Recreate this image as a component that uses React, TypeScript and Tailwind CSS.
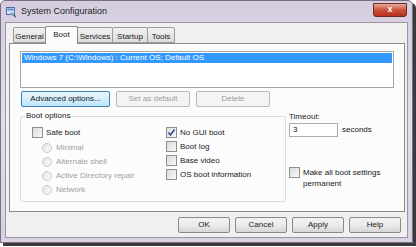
import React from 'react';

const font = { fontFamily: '"Liberation Sans", Arial, sans-serif' };

const WinButton: React.FC<{ label: string; width: string; disabled?: boolean; focused?: boolean }> = ({ label, width, disabled, focused }) => {
  const border = disabled ? 'border-[#b5b9bc]' : focused ? 'border-[#3c7fb1]' : 'border-[#8a8a8a]';
  const bg = disabled
    ? 'bg-[#f4f4f4]'
    : focused
    ? 'bg-gradient-to-b from-[#eaf6fd] to-[#bee6fd]'
    : 'bg-gradient-to-b from-[#f2f2f2] via-[#ebebeb] to-[#d6d6d6]';
  return (
    <div
      className={`${width} h-[16px] rounded-[2px] border ${border} ${bg} flex items-center justify-center text-[8px] ${disabled ? 'text-[#9d9d9d]' : 'text-[#1a1a1a]'}`}
    >
      {label}
    </div>
  );
};

const CheckBox: React.FC<{ label: React.ReactNode; checked?: boolean }> = ({ label, checked }) => (
  <div className="flex items-start gap-[3px] min-h-[14px]">
    <div className="w-[11px] h-[11px] border border-[#8e8f8f] bg-gradient-to-br from-[#dcdcdc] to-[#f8f8f8] flex items-center justify-center shrink-0">
      {checked && (
        <svg width="9" height="9" viewBox="0 0 9 9">
          <path d="M1.5 4.5 L3.5 7 L7.5 1.5" stroke="#2d4a8c" strokeWidth="1.5" fill="none" />
        </svg>
      )}
    </div>
    <span className="text-[8px] leading-[11px] text-[#1a1a1a]">{label}</span>
  </div>
);

const Radio: React.FC<{ label: string }> = ({ label }) => (
  <div className="flex items-center gap-[4px] h-[14px]">
    <div className="w-[10px] h-[10px] rounded-full border border-[#c8c8c8] bg-gradient-to-br from-[#e6e6e6] to-[#fafafa]" />
    <span className="text-[8px] text-[#a0a0a0]">{label}</span>
  </div>
);

export default function App() {
  const tabs = ['General', 'Boot', 'Services', 'Startup', 'Tools'];
  const tabWidths: Record<string, string> = {
    General: 'w-[33px]',
    Boot: 'w-[33px]',
    Services: 'w-[36px]',
    Startup: 'w-[36px]',
    Tools: 'w-[28px]',
  };

  return (
    <div className="w-[416px] h-[247px] bg-white overflow-hidden" style={font}>
      <div className="w-[413px] h-[243px] rounded-t-[5px] bg-gradient-to-b from-[#d6cde0] via-[#e4dde9] to-[#d9d0e2] border border-[#7a6f86] shadow-[3px_3px_0_#3a3a3a] flex flex-col">
        {/* title bar */}
        <div className="h-[21px] flex items-center pl-[5px] pr-[5px] shrink-0">
          <svg width="11" height="11" viewBox="0 0 11 11" className="mr-[4px] mt-[1px]">
            <rect x="0.5" y="0.5" width="8" height="7" fill="#cfe3f5" stroke="#4a6ea0" />
            <rect x="1.5" y="1.5" width="6" height="2" fill="#5d8ccf" />
            <path d="M5 6 L10 10" stroke="#3e5f8c" strokeWidth="1.5" />
            <circle cx="6" cy="7" r="1.5" fill="#8aa" />
          </svg>
          <span className="text-[9px] text-[#1e1e1e] mt-[1px]">System Configuration</span>
          <div className="ml-auto -mt-[4px] w-[34px] h-[14px] rounded-b-[3px] border border-[#6b2a22] bg-gradient-to-b from-[#e8a99a] via-[#c9513b] to-[#b8311c] flex items-center justify-center">
            <span className="text-[9px] font-bold text-white leading-none">x</span>
          </div>
        </div>

        {/* client area */}
        <div className="flex-1 mx-[4px] mb-[4px] bg-[#f0f0f0] border border-[#9c95a4] flex flex-col">
          {/* tabs */}
          <div className="flex items-end h-[20px] pl-[7px] shrink-0">
            {tabs.map((t) => {
              const sel = t === 'Boot';
              return (
                <div
                  key={t}
                  className={`${tabWidths[t]} ${
                    sel
                      ? 'h-[18px] bg-[#fcfcfc] border-[#8c8c8c] border-b-0 relative z-10 -mb-[1px] pt-[2px]'
                      : 'h-[16px] bg-gradient-to-b from-[#f2f2f2] to-[#dcdcdc] border-[#9a9a9a] pt-[3px]'
                  } border rounded-t-[2px] text-[8px] text-[#1a1a1a] flex justify-center -mr-px`}
                >
                  {t}
                </div>
              );
            })}
          </div>

          {/* tab panel */}
          <div className="ml-[3px] mr-[2px] h-[169px] bg-[#fcfcfc] border border-[#8c8c8c] px-[10px] pt-[7px] flex flex-col shrink-0">
            <div className="w-[374px] h-[37px] border border-[#a5a5a5] bg-white p-[1px]">
              <div className="h-[10px] bg-[#3399ff] text-white text-[8px] leading-[10px] pl-[2px]">
                Windows 7 (C:\Windows) : Current OS; Default OS
              </div>
            </div>

            <div className="flex gap-[6px] mt-[3px] pl-[1px]">
              <WinButton label="Advanced options..." width="w-[89px]" focused />
              <WinButton label="Set as default" width="w-[74px]" disabled />
              <WinButton label="Delete" width="w-[74px]" disabled />
            </div>

            <div className="flex mt-[5px]">
              <div className="relative w-[266px] h-[86px] border border-[#d5dfe5] rounded-[2px] mt-[4px]">
                <span className="absolute -top-[6px] left-[4px] bg-[#fcfcfc] px-[1px] text-[8px] leading-[10px] text-[#1a1a1a]">
                  Boot options
                </span>
                <div className="flex pt-[10px] pl-[11px]">
                  <div className="w-[134px] flex flex-col">
                    <CheckBox label="Safe boot" />
                    <div className="pl-[10px] flex flex-col">
                      <Radio label="Minimal" />
                      <Radio label="Alternate shell" />
                      <Radio label="Active Directory repair" />
                      <Radio label="Network" />
                    </div>
                  </div>
                  <div className="flex flex-col">
                    <CheckBox label="No GUI boot" checked />
                    <CheckBox label="Boot log" />
                    <CheckBox label="Base video" />
                    <CheckBox label="OS boot information" />
                  </div>
                </div>
              </div>

              <div className="ml-[3px] flex flex-col">
                <span className="text-[8px] leading-[10px] text-[#1a1a1a]">Timeout:</span>
                <div className="flex items-center mt-[1px]">
                  <div className="w-[49px] h-[14px] border border-[#abadb3] bg-white text-[8px] leading-[12px] pl-[3px] text-[#1a1a1a]">
                    3
                  </div>
                  <span className="ml-[4px] text-[8px] text-[#1a1a1a]">seconds</span>
                </div>
                <div className="mt-[30px]">
                  <CheckBox
                    label={
                      <>
                        Make all boot settings
                        <br />
                        permanent
                      </>
                    }
                  />
                </div>
              </div>
            </div>
          </div>

          {/* dialog buttons */}
          <div className="flex justify-end gap-[5px] pr-[6px] mt-[5px]">
            <WinButton label="OK" width="w-[52px]" />
            <WinButton label="Cancel" width="w-[52px]" />
            <WinButton label="Apply" width="w-[52px]" />
            <WinButton label="Help" width="w-[52px]" />
          </div>
        </div>
      </div>
    </div>
  );
}
